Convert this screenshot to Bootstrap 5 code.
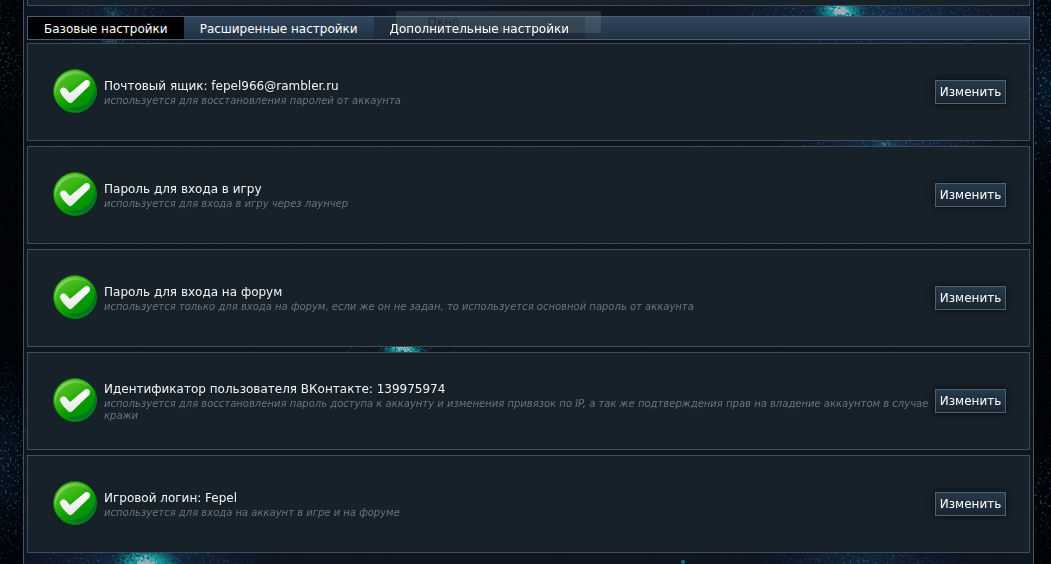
<!DOCTYPE html>
<html lang="ru" data-bs-theme="dark">
<head>
<meta charset="utf-8">
<meta name="viewport" content="width=device-width, initial-scale=1">
<title>Настройки аккаунта</title>
<link href="https://cdn.jsdelivr.net/npm/bootstrap@5.3.0/dist/css/bootstrap.min.css" rel="stylesheet">
<style>
body { background: #010307; color: #f2f4f5; font: 12px/16px Verdana, "DejaVu Sans", sans-serif; overflow-x: hidden; }
.space { z-index: -1; }
.glow { z-index: 0; }
.shell { margin: 0 17px 0 23px; padding: 0 3px; border: solid #43535f; border-width: 0 1px; background: rgba(24, 32, 50, .6); }
.panel { min-height: 98px; padding: 0 23px 0 25px; background: #17212a; border: 1px solid #3e4f59; }
.panel-cut { height: 6px; background: #17212a; border: 1px solid #3e4f59; border-top: 0; }
.tabs { height: 24px; margin: 10px 0 3px; border: 1px solid #4a6071; background: linear-gradient(#30475e, #213143); }
.tabs .nav-link { padding: 0 16px; line-height: 24px; color: #fff; font-size: 12px; height: 22px; }
.tabs .nav-link.active { background: #000; }
.tabs .nav-link.tinted { background: linear-gradient(#223345, #1d2a37); }
.ghost { left: 22px; top: -6px; width: 205px; height: 22px; padding-left: 32px; line-height: 22px; background: rgba(170, 180, 180, .16); color: rgba(10, 20, 32, .55); }
.stack { gap: 5px; }
.hint { padding-top: 1px; color: #667582; font-size: 10px; line-height: 12px; font-style: italic; }
.tick { width: 44px; height: 44px; margin-bottom: 2px; }
.label-col { margin: 0 5px 0 7px; }
.btn-edit { width: 71px; height: 24px; padding: 0; border: 1px solid #4c6370; border-radius: 0; background: linear-gradient(#25394b, #192531); box-shadow: 0 0 6px #05090d; color: #fff; font-size: 12px; line-height: 22px; }
.btn-edit:hover { background: #2d4357; color: #fff; border-color: #6d8796; }
</style>
</head>
<body>
<svg class="space position-fixed top-0 start-0 w-100 h-100" viewBox="0 0 1051 564" preserveAspectRatio="xMidYMid slice" aria-hidden="true">
  <defs>
    <radialGradient id="haze"><stop offset="0" stop-color="#2465a0" stop-opacity=".7"/><stop offset="1" stop-color="#123568" stop-opacity="0"/></radialGradient>
    <radialGradient id="core"><stop offset="0" stop-color="#a9b4bd"/><stop offset=".25" stop-color="#8fa9b3"/><stop offset=".35" stop-color="#17a3a8"/><stop offset=".6" stop-color="#128892" stop-opacity=".7"/><stop offset="1" stop-color="#0c6070" stop-opacity="0"/></radialGradient>
    <radialGradient id="spread"><stop offset="0" stop-color="#fff"/><stop offset="1" stop-color="#fff" stop-opacity="0"/></radialGradient>
    <filter id="grain" x="0" y="0" width="100%" height="100%"><feTurbulence type="fractalNoise" baseFrequency=".4" numOctaves="2" seed="7"/><feColorMatrix values="0 0 0 0 .1  0 0 0 0 .42  0 0 0 0 .6  6 0 0 0 -3.6"/></filter>
    <filter id="rough" x="-20%" y="-20%" width="140%" height="140%"><feTurbulence type="fractalNoise" baseFrequency=".4" numOctaves="2" seed="3" result="n"/><feDisplacementMap in="SourceGraphic" in2="n" scale="18"/></filter>
    <mask id="field">
      <rect width="1051" height="564" fill="#101010"/>
      <g fill="url(#spread)">
        <ellipse cx="125" cy="25" rx="80" ry="40"/><ellipse cx="0" cy="50" rx="35" ry="90" opacity=".4"/>
        <ellipse cx="870" cy="15" rx="200" ry="50"/><ellipse cx="1040" cy="90" rx="50" ry="120" opacity=".5"/>
        <ellipse cx="890" cy="145" rx="130" ry="25"/><ellipse cx="400" cy="350" rx="70" ry="25"/>
        <ellipse cx="5" cy="460" rx="50" ry="120" opacity=".5"/><ellipse cx="145" cy="564" rx="130" ry="40"/>
        <ellipse cx="860" cy="564" rx="110" ry="25"/><ellipse cx="1045" cy="495" rx="30" ry="60" opacity=".4"/>
      </g>
    </mask>
  </defs>
  <g fill="url(#haze)">
    <ellipse cx="870" cy="15" rx="190" ry="60"/><ellipse cx="1045" cy="90" rx="40" ry="100" opacity=".3"/>
    <ellipse cx="110" cy="20" rx="90" ry="40" opacity=".5"/><ellipse cx="890" cy="144" rx="120" ry="18"/>
    <ellipse cx="0" cy="460" rx="50" ry="110" opacity=".25"/><ellipse cx="145" cy="564" rx="130" ry="36"/>
    <ellipse cx="860" cy="564" rx="110" ry="30" opacity=".7"/><ellipse cx="430" cy="20" rx="90" ry="30" opacity=".3"/>
  </g>
  <rect width="1051" height="564" filter="url(#grain)" mask="url(#field)"/>
</svg>

<main class="shell position-relative min-vh-100">
  <!-- Bright star cores shine through the gaps between panels -->
  <svg class="glow position-fixed top-0 start-0 w-100 h-100" viewBox="0 0 1051 564" preserveAspectRatio="xMidYMid slice" aria-hidden="true">
    <g fill="url(#core)" filter="url(#rough)">
      <ellipse cx="840" cy="11" rx="28" ry="14"/><ellipse cx="404" cy="350" rx="26" ry="7"/>
      <ellipse cx="147" cy="566" rx="36" ry="24"/><ellipse cx="885" cy="144" rx="16" ry="3" opacity=".4"/>
      <ellipse cx="113" cy="13" rx="14" ry="8" opacity=".2"/><ellipse cx="112" cy="41" rx="14" ry="4" opacity=".4"/>
    </g>
    <circle cx="683" cy="562" r="2" fill="#1b6f8f"/>
  </svg>
  <div class="position-relative">
    <div class="panel-cut"></div>
    <nav class="tabs nav flex-nowrap" aria-label="Разделы настроек">
      <a class="nav-link active" href="#" aria-current="page">Базовые настройки</a>
      <a class="nav-link" href="#">Расширенные настройки</a>
      <a class="nav-link tinted position-relative" href="#"><span class="ghost position-absolute" aria-hidden="true">Окно</span><span class="position-relative">Дополнительные настройки</span></a>
    </nav>
    <div class="stack d-flex flex-column">
      <section class="panel d-flex align-items-center">
        <svg class="tick flex-shrink-0" viewBox="0 0 44 44" aria-hidden="true">
          <defs>
            <linearGradient id="ball" x1=".15" y1=".05" x2=".75" y2=".95"><stop offset="0" stop-color="#59c22c"/><stop offset=".35" stop-color="#3cb616"/><stop offset=".65" stop-color="#079b00"/><stop offset="1" stop-color="#008d08"/></linearGradient>
            <linearGradient id="shine" x1="0" y1="0" x2=".8" y2=".5"><stop offset="0" stop-color="#a0df80"/><stop offset="1" stop-color="#60c341" stop-opacity=".3"/></linearGradient>
            <linearGradient id="mark-fill" x1="0" y1="0" x2="0" y2="1"><stop offset="0" stop-color="#fff"/><stop offset="1" stop-color="#e7e7e7"/></linearGradient>
            <symbol id="tick" viewBox="0 0 44 44">
              <circle cx="22" cy="22" r="21.5" fill="url(#ball)" stroke="#087c05"/>
              <path d="M42 15C43 31 31 40 14 39c12 7 29-1 29-17z" fill="#00722d"/>
              <path d="M2 28C-1 12 12 0 27 3c5 1 9 4 12 8C29 3 16 3 9 11c-5 5-7 11-7 17z" fill="url(#shine)"/>
              <path d="M7 22c0-2 2-4 4-3.500 2 0 4 4 6 5.500L32 11.500c2-1.500 5 0 5 2.500 0 2-1 3-2 4L19.500 33c-1.500 1.500-3 1.500-4.500 0-3-3-7-7-8-11z" fill="url(#mark-fill)"/>
            </symbol>
          </defs>
          <use href="#tick"/>
        </svg>
        <div class="label-col flex-grow-1"><div>Почтовый ящик: fepel966@rambler.ru</div><div class="hint">используется для восстановления паролей от аккаунта</div></div>
        <button type="button" class="btn btn-edit flex-shrink-0">Изменить</button>
      </section>
      <section class="panel d-flex align-items-center">
        <svg class="tick flex-shrink-0" aria-hidden="true"><use href="#tick"/></svg>
        <div class="label-col flex-grow-1"><div>Пароль для входа в игру</div><div class="hint">используется для входа в игру через лаунчер</div></div>
        <button type="button" class="btn btn-edit flex-shrink-0">Изменить</button>
      </section>
      <section class="panel d-flex align-items-center">
        <svg class="tick flex-shrink-0" aria-hidden="true"><use href="#tick"/></svg>
        <div class="label-col flex-grow-1"><div>Пароль для входа на форум</div><div class="hint">используется только для входа на форум, если же он не задан, то используется основной пароль от аккаунта</div></div>
        <button type="button" class="btn btn-edit flex-shrink-0">Изменить</button>
      </section>
      <section class="panel d-flex align-items-center">
        <svg class="tick flex-shrink-0" aria-hidden="true"><use href="#tick"/></svg>
        <div class="label-col flex-grow-1"><div>Идентификатор пользователя ВКонтакте: 139975974</div><div class="hint">используется для восстановления пароль доступа к аккаунту и изменения привязок по IP, а так же подтверждения прав на владение аккаунтом в случае кражи</div></div>
        <button type="button" class="btn btn-edit flex-shrink-0">Изменить</button>
      </section>
      <section class="panel d-flex align-items-center">
        <svg class="tick flex-shrink-0" aria-hidden="true"><use href="#tick"/></svg>
        <div class="label-col flex-grow-1"><div>Игровой логин: Fepel</div><div class="hint">используется для входа на аккаунт в игре и на форуме</div></div>
        <button type="button" class="btn btn-edit flex-shrink-0">Изменить</button>
      </section>
    </div>
  </div>
</main>
<script src="https://cdn.jsdelivr.net/npm/bootstrap@5.3.0/dist/js/bootstrap.bundle.min.js"></script>
</body>
</html>
